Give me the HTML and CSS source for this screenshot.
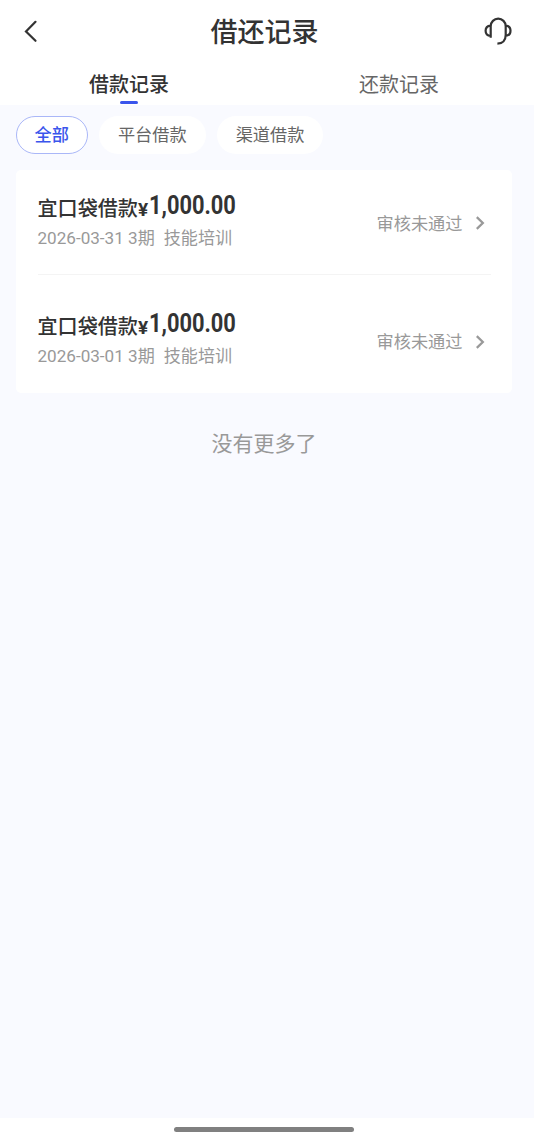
FILE: index.html
```html
<!DOCTYPE html>
<html lang="zh-CN">
<head>
<meta charset="utf-8">
<title>借还记录</title>
<link rel="stylesheet" href="styles.css">
</head>
<body>
<header class="topbar">
  <svg class="back" viewBox="0 0 16 24"><path d="M13.5 2.8 4 12.5l9.5 9.3"/></svg>
  <h1 class="title">借还记录</h1>
  <svg class="service" viewBox="0 0 30 30"><path d="M8.7 21.7V10.2a7.5 7.5 0 0 1 15 0V19c0 5-3 8.5-8.3 8.7M8.7 9.6C5.2 9.8 3.6 12 3.6 14.8s1.6 5 5.1 5.2M23.7 9.6c3.2.2 4.8 2.4 4.8 5.2s-1.6 4.8-4.8 5"/></svg>
</header>
<nav class="tabs">
  <div class="tab tab-active">借款记录</div>
  <div class="tab">还款记录</div>
</nav>
<main class="content">
  <div class="filters">
    <span class="chip chip-active">全部</span>
    <span class="chip">平台借款</span>
    <span class="chip">渠道借款</span>
  </div>
  <section class="card">
    <div class="record">
      <div class="info">
        <div class="name">宜口袋借款<span class="yen">¥</span><span class="amount">1,000.00</span></div>
        <div class="meta"><span>2026-03-31 3期</span><span>技能培训</span></div>
      </div>
      <div class="status">审核未通过</div>
      <svg class="arrow" viewBox="0 0 10 16"><path d="M1.8 2.2 7.8 8l-6 5.8"/></svg>
    </div>
    <div class="record">
      <div class="info">
        <div class="name">宜口袋借款<span class="yen">¥</span><span class="amount">1,000.00</span></div>
        <div class="meta"><span>2026-03-01 3期</span><span>技能培训</span></div>
      </div>
      <div class="status">审核未通过</div>
      <svg class="arrow" viewBox="0 0 10 16"><path d="M1.8 2.2 7.8 8l-6 5.8"/></svg>
    </div>
  </section>
  <p class="end">没有更多了</p>
</main>
<footer class="homebar"><div class="handle"></div></footer>
</body>
</html>
```
FILE: styles.css
```css
* { box-sizing: border-box; }
body {
  margin: 0;
  height: 1142px;
  display: flex;
  flex-direction: column;
  background: #fff;
  color: #333;
  font-family: Roboto, "Noto Sans CJK SC", sans-serif;
}
svg { display: block; fill: none; stroke-linecap: round; stroke-linejoin: round; }
.topbar {
  height: 62px;
  padding: 0 20px 0 22px;
  display: flex;
  align-items: center;
  justify-content: space-between;
}
.back { width: 16px; height: 24px; stroke: #333; stroke-width: 2.2; stroke-linejoin: miter; }
.title { margin: 0 0 0 9px; padding-top: 4px; font-size: 27px; line-height: 40px; font-weight: 500; }
.service { width: 30px; height: 30px; stroke: #333; stroke-width: 2.2; stroke-linecap: butt; margin-right: 2px; }
.tabs { height: 43px; display: flex; padding-right: 6px; }
.tabs .tab:first-child { width: 258px; }
.tab {
  width: 282px;
  flex: none;
  display: flex;
  flex-direction: column;
  align-items: center;
  font-size: 20px;
  line-height: 30px;
  padding-top: 8px;
  color: #666;
}
.tab-active { color: #333; font-weight: 500; }
.tab-active::after { content: ""; width: 18px; height: 3px; border-radius: 2px; background: #3a55ec; margin-top: 1px; }
.content { flex: 1; background: #f9faff; padding: 11px 22px 0 15px; }
.filters { display: flex; gap: 11px; padding-left: .5px; }
.chip {
  height: 38px;
  padding: 0 19px;
  border-radius: 19px;
  background: #fff;
  color: #666;
  font-size: 17.2px;
  line-height: 39px;
}
.chip-active { color: #3a55ec; font-weight: 500; padding: 0 18px; border: 1px solid #aab7f8; line-height: 37px; }
.card { margin-top: 16px; margin-left: 1px; height: 223px; border-radius: 5px; background: #fff; padding: 0 21.5px; }
.record { height: 105px; display: flex; align-items: center; border-bottom: 1px solid #f4f4f4; }
.record + .record { height: 118px; padding-top: 14px; border: 0; }
.record:first-child { padding-top: 1px; }
.info { flex: 1; padding-bottom: 5px; }
.name { display: flex; align-items: baseline; font-size: 20.1px; line-height: 32px; font-weight: 500; white-space: nowrap; padding-top: 1px; }
.yen { font-size: 19px; font-weight: 700; width: 11px; }
.amount {
  font-size: 26px;
  font-weight: 700;
  width: 88px;
  transform: translateY(-2px) scaleX(.84);
  transform-origin: 0 50%;
}
.meta { display: flex; gap: 9px; font-size: 17.1px; line-height: 25px; color: #999; white-space: nowrap; }
.status { font-size: 17.2px; line-height: 26px; color: #999; margin-right: 12px; padding-top: 2px; }
.arrow { width: 10px; height: 16px; stroke: #999; stroke-width: 2.3; stroke-linejoin: miter; stroke-linecap: butt; margin: 1px 6px 0 0; }
.end { margin: 35px 0 0; padding-left: 1px; text-align: center; font-size: 21px; line-height: 32px; color: #999; }
.homebar { height: 24px; display: flex; justify-content: center; padding: 9px 6px 0 0; }
.handle { width: 180px; height: 5px; border-radius: 3px; background: #808080; }
```
